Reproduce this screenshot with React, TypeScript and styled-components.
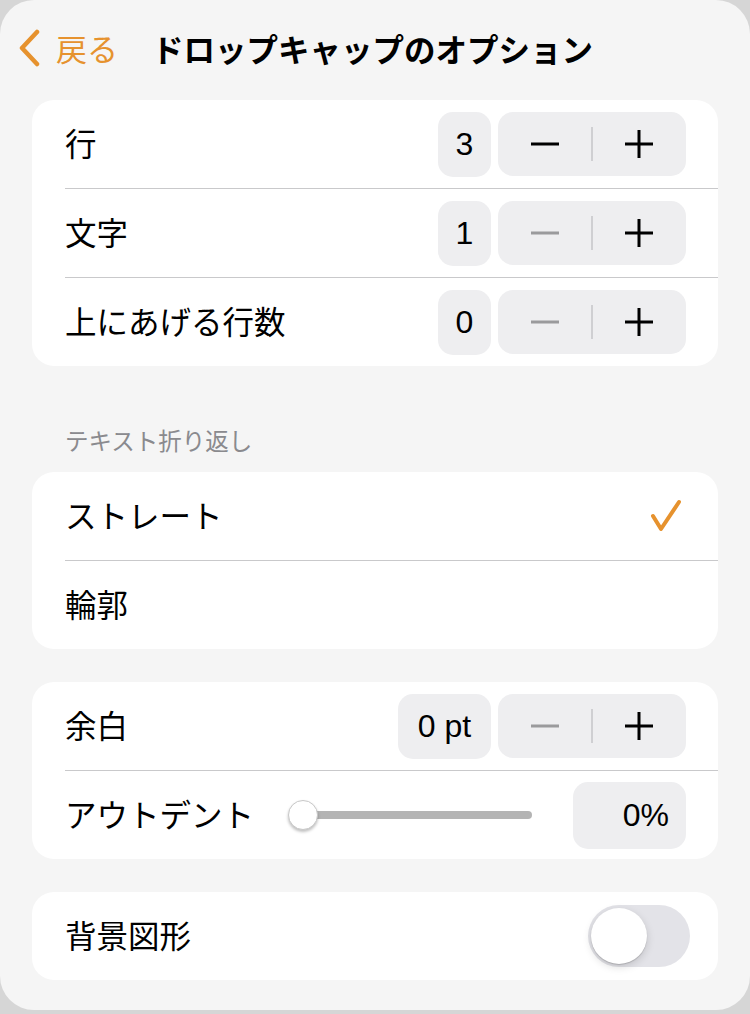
import React, { useState } from 'react'
import styled, { createGlobalStyle } from 'styled-components'

const GlobalStyle = createGlobalStyle`
	html, body {
		margin: 0;
		padding: 0;
		background: #d6d6d6;
	}
	body {
		font-family: 'Noto Sans CJK JP', 'Liberation Sans', sans-serif;
		-webkit-font-smoothing: antialiased;
	}
`

const ORANGE = '#e6922e'

const Panel = styled.div`
	width: 750px;
	height: 1010px;
	box-sizing: border-box;
	background: #f5f5f5;
	border-radius: 34px;
	padding: 0 32px;
	overflow: hidden;
`
const Header = styled.div`
	height: 100px;
	box-sizing: border-box;
	padding-bottom: 4px;
	display: flex;
	align-items: center;
	margin-left: -14px;
`
const BackButton = styled.div`
	display: flex;
	align-items: center;
	gap: 14px;
	color: ${ORANGE};
	font-size: 31px;
	line-height: 40px;
	margin-right: 34px;
`
const Title = styled.div`
	font-size: 31.5px;
	font-weight: 700;
	color: #000;
	line-height: 40px;
`
const Card = styled.div<{ $gap?: number }>`
	background: #fff;
	border-radius: 22px;
	margin-top: ${p => p.$gap ?? 0}px;
	padding-left: 33px;
	overflow: hidden;
`
const Row = styled.div`
	height: 88px;
	display: flex;
	align-items: center;
	padding-right: 32px;
	& + & {
		border-top: 1px solid #c9c9cb;
	}
`
const Label = styled.div`
	font-size: 31.5px;
	color: #000;
	line-height: 40px;
	margin-bottom: 5px;
	flex: 0 0 auto;
`
const Spacer = styled.div`
	flex: 1 1 auto;
`
const SectionLabel = styled.div`
	padding: 58px 33px 16px;
	font-size: 23.5px;
	line-height: 32px;
	color: #8a8a8e;
`
const ValueBox = styled.div<{ $w: number; $h?: number; $align?: 'center' | 'right' }>`
	width: ${p => p.$w}px;
	height: ${p => p.$h ?? 65}px;
	box-sizing: border-box;
	border-radius: 15px;
	background: #eeeef0;
	display: flex;
	align-items: center;
	justify-content: ${p => (p.$align === 'right' ? 'flex-end' : 'center')};
	padding-right: ${p => (p.$align === 'right' ? 17 : 0)}px;
	font-family: 'Liberation Sans', 'Noto Sans CJK JP', sans-serif;
	font-size: 32px;
	color: #000;
`
const Stepper = styled.div`
	width: 188px;
	height: 64px;
	margin-left: 7px;
	border-radius: 15px;
	background: #eeeef0;
	display: flex;
	align-items: center;
`
const StepButton = styled.div`
	flex: 1;
	height: 100%;
	display: flex;
	align-items: center;
	justify-content: center;
`
const StepDivider = styled.div`
	width: 1.5px;
	height: 34px;
	background: #cfcfd2;
`
const SliderWrap = styled.div`
	position: relative;
	width: 244px;
	height: 32px;
	margin-left: 34px;
`
const Track = styled.div`
	position: absolute;
	left: 15px;
	right: 0;
	top: 12px;
	height: 8px;
	border-radius: 4px;
	background: #b4b4b4;
`
const Thumb = styled.div`
	position: absolute;
	left: 0;
	top: 1px;
	width: 30px;
	height: 30px;
	box-sizing: border-box;
	border-radius: 50%;
	background: #fff;
	border: 1px solid #c8c8c8;
	box-shadow: 0 2px 3px rgba(0, 0, 0, 0.25);
`
const Toggle = styled.div<{ $on: boolean }>`
	position: relative;
	width: 102px;
	height: 62px;
	border-radius: 31px;
	background: ${p => (p.$on ? '#34c759' : '#e3e3e8')};
	cursor: pointer;
	margin-right: -4px;
`
const Knob = styled.div<{ $on: boolean }>`
	position: absolute;
	top: 3px;
	left: ${p => (p.$on ? 43 : 3)}px;
	width: 56px;
	height: 56px;
	border-radius: 50%;
	background: #fff;
	box-shadow: 0 3px 8px rgba(0, 0, 0, 0.15), 0 1px 1px rgba(0, 0, 0, 0.16);
`

const Minus = ({ disabled }: { disabled?: boolean }) => (
	<svg width="30" height="30" viewBox="0 0 30 30">
		<line x1="1" y1="15" x2="29" y2="15" stroke={disabled ? '#9a9a9c' : '#000'} strokeWidth="3" />
	</svg>
)
const Plus = () => (
	<svg width="30" height="30" viewBox="0 0 30 30">
		<line x1="1" y1="15" x2="29" y2="15" stroke="#000" strokeWidth="3" />
		<line x1="15" y1="1" x2="15" y2="29" stroke="#000" strokeWidth="3" />
	</svg>
)

const StepperRow = ({ label, value, width, minusDisabled }: { label: string; value: string; width: number; minusDisabled?: boolean }) => (
	<Row>
		<Label>{label}</Label>
		<Spacer />
		<ValueBox $w={width}>{value}</ValueBox>
		<Stepper>
			<StepButton><Minus disabled={minusDisabled} /></StepButton>
			<StepDivider />
			<StepButton><Plus /></StepButton>
		</Stepper>
	</Row>
)

const App = () => {
	const [bgShape, setBgShape] = useState<boolean>(false)

	return (
		<>
			<GlobalStyle />
			<Panel>
				<Header>
					<BackButton>
						<svg width="24" height="38" viewBox="0 0 24 38">
							<polyline points="19,3 4,19 19,35" fill="none" stroke={ORANGE} strokeWidth="4.5" strokeLinecap="round" strokeLinejoin="round" />
						</svg>
						<span>戻る</span>
					</BackButton>
					<Title>ドロップキャップのオプション</Title>
				</Header>

				<Card>
					<StepperRow label="行" value="3" width={53} />
					<StepperRow label="文字" value="1" width={53} minusDisabled />
					<StepperRow label="上にあげる行数" value="0" width={53} minusDisabled />
				</Card>

				<SectionLabel>テキスト折り返し</SectionLabel>
				<Card>
					<Row>
						<Label>ストレート</Label>
						<Spacer />
						<svg width="34" height="34" viewBox="0 0 34 34" style={{ marginRight: 3 }}>
							<polyline points="4,17 12,30 30,3" fill="none" stroke={ORANGE} strokeWidth="4" strokeLinecap="round" strokeLinejoin="round" />
						</svg>
					</Row>
					<Row>
						<Label>輪郭</Label>
					</Row>
				</Card>

				<Card $gap={33}>
					<StepperRow label="余白" value="0 pt" width={93} minusDisabled />
					<Row>
						<Label>アウトデント</Label>
						<SliderWrap>
							<Track />
							<Thumb />
						</SliderWrap>
						<Spacer />
						<ValueBox $w={113} $h={67} $align="right">0%</ValueBox>
					</Row>
				</Card>

				<Card $gap={33}>
					<Row>
						<Label>背景図形</Label>
						<Spacer />
						<Toggle $on={bgShape} onClick={() => setBgShape(v => !v)}>
							<Knob $on={bgShape} />
						</Toggle>
					</Row>
				</Card>
			</Panel>
		</>
	)
}

export default App
